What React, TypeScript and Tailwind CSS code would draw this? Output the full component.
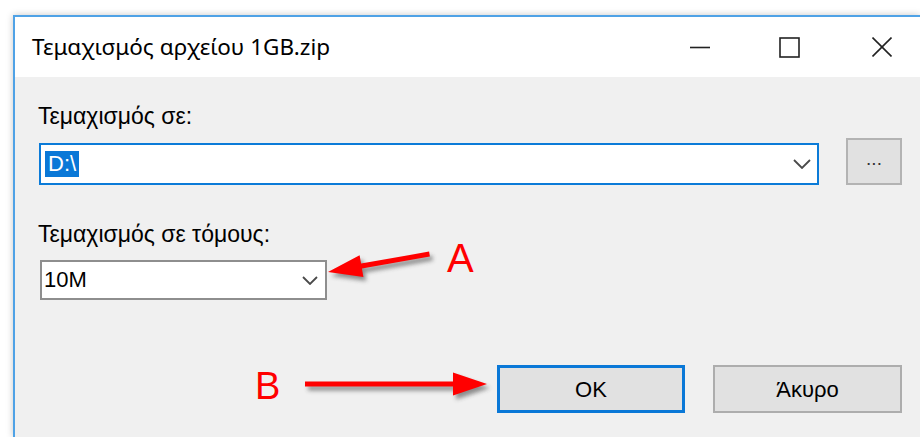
import React from "react";

const sans = { fontFamily: '"Liberation Sans", Arial, sans-serif' };
const ui = { fontFamily: '"Noto Sans", "Open Sans", sans-serif' };

function Chevron({ w, h }: { w: number; h: number }) {
  return (
    <svg width={w} height={h} viewBox={`0 0 ${w} ${h}`} fill="none">
      <path
        d={`M1 1 L${w / 2} ${h - 1} L${w - 1} 1`}
        stroke="#4a4a4a"
        strokeWidth="1.8"
      />
    </svg>
  );
}

function TitleButtons() {
  return (
    <div className="flex items-center mr-[28px]">
      <svg width="20" height="20" viewBox="0 0 20 20">
        <line x1="0" y1="10.5" x2="20" y2="10.5" stroke="#222" strokeWidth="1.6" />
      </svg>
      <svg className="ml-[69px]" width="21" height="21" viewBox="0 0 21 21" fill="none">
        <rect x="1" y="1" width="19" height="19" stroke="#222" strokeWidth="1.6" />
      </svg>
      <svg className="ml-[72px]" width="20" height="20" viewBox="0 0 20 20">
        <line x1="0.5" y1="0.5" x2="19.5" y2="19.5" stroke="#222" strokeWidth="1.6" />
        <line x1="19.5" y1="0.5" x2="0.5" y2="19.5" stroke="#222" strokeWidth="1.6" />
      </svg>
    </div>
  );
}

export default function App() {
  return (
    <div className="relative w-[920px] h-[437px] overflow-hidden bg-white pt-[15px] pl-[13px]">
      <div className="w-[907px] h-[422px] flex flex-col border-l-2 border-t-2 border-[#4fa2e6] shadow-[0_0_7px_rgba(0,0,0,0.22)]">
        {/* title bar */}
        <div className="h-[60px] bg-white flex items-center pl-[17px] shrink-0">
          <span className="text-[22.5px] text-black leading-none" style={ui}>
            Τεμαχισμός αρχείου 1GB.zip
          </span>
          <div className="flex-1" />
          <TitleButtons />
        </div>

        {/* client area */}
        <div className="flex-1 bg-[#f0f0f0] pl-[23px] pt-[26px] text-black" style={sans}>
          <div className="h-[26px] leading-[26px] text-[23px]">Τεμαχισμός σε:</div>

          <div className="flex items-end mt-[9px]">
            <div className="ml-[1px] w-[780px] h-[42px] border-2 border-[#0b7bd8] bg-white flex items-center">
              <span className="ml-[4px] h-[26px] leading-[26px] px-[3px] bg-[#0a78d7] text-white text-[22px]">
                D:\
              </span>
              <div className="ml-auto mr-[6px] flex items-center">
                <Chevron w={18} h={10} />
              </div>
            </div>
            <div className="ml-[27px] w-[56px] h-[47px] border-2 border-[#b3b3b3] bg-[#e1e1e1] flex items-center justify-center text-[19px] text-[#333] pb-[4px]">
              ...
            </div>
          </div>

          <div className="mt-[36px] h-[26px] leading-[26px] text-[23px]">Τεμαχισμός σε τόμους:</div>

          <div className="mt-[13px] ml-[2px] w-[287px] h-[40px] border-2 border-[#8e8e8e] bg-white flex items-center">
            <span className="ml-[2px] text-[22px] leading-none">10M</span>
            <div className="ml-auto mr-[7px] flex items-center">
              <Chevron w={16} h={9} />
            </div>
          </div>

          <div className="mt-[65px] flex">
            <button className="ml-[459px] w-[188px] h-[48px] border-[3px] border-[#0a78d7] bg-[#e1e1e1] text-[22px] flex items-center justify-center">
              OK
            </button>
            <button className="ml-[28px] w-[189px] h-[48px] border-2 border-[#adadad] bg-[#e1e1e1] text-[22px] flex items-center justify-center">
              Άκυρο
            </button>
          </div>
        </div>
      </div>

      {/* red annotation arrows drawn over the dialog */}
      <svg className="absolute inset-0 pointer-events-none" width="920" height="437">
        <defs>
          <filter id="soft" x="-20%" y="-50%" width="140%" height="200%">
            <feGaussianBlur stdDeviation="2.2" />
          </filter>
        </defs>
        <g filter="url(#soft)" fill="#3a3a3a" opacity="0.55" transform="translate(3 4)">
          <polygon points="328,272 363.4,276.9 361.9,268.6 429.9,256.6 429.1,251.6 361.1,263.6 359.6,255.3" />
          <polygon points="487,384 453,395.5 453,386.5 305,386.5 305,381.5 453,381.5 453,372.5" />
        </g>
        <g fill="#ff0000">
          <polygon points="328,272 363.4,276.9 361.9,268.6 429.9,256.6 429.1,251.6 361.1,263.6 359.6,255.3" />
          <polygon points="487,384 453,395.5 453,386.5 305,386.5 305,381.5 453,381.5 453,372.5" />
        </g>
      </svg>
      <span className="absolute left-[447px] top-[238px] text-[40px] leading-[40px] text-[#ff0000]" style={sans}>
        A
      </span>
      <span className="absolute left-[255px] top-[367px] text-[38px] leading-[38px] text-[#ff0000]" style={sans}>
        B
      </span>
    </div>
  );
}
